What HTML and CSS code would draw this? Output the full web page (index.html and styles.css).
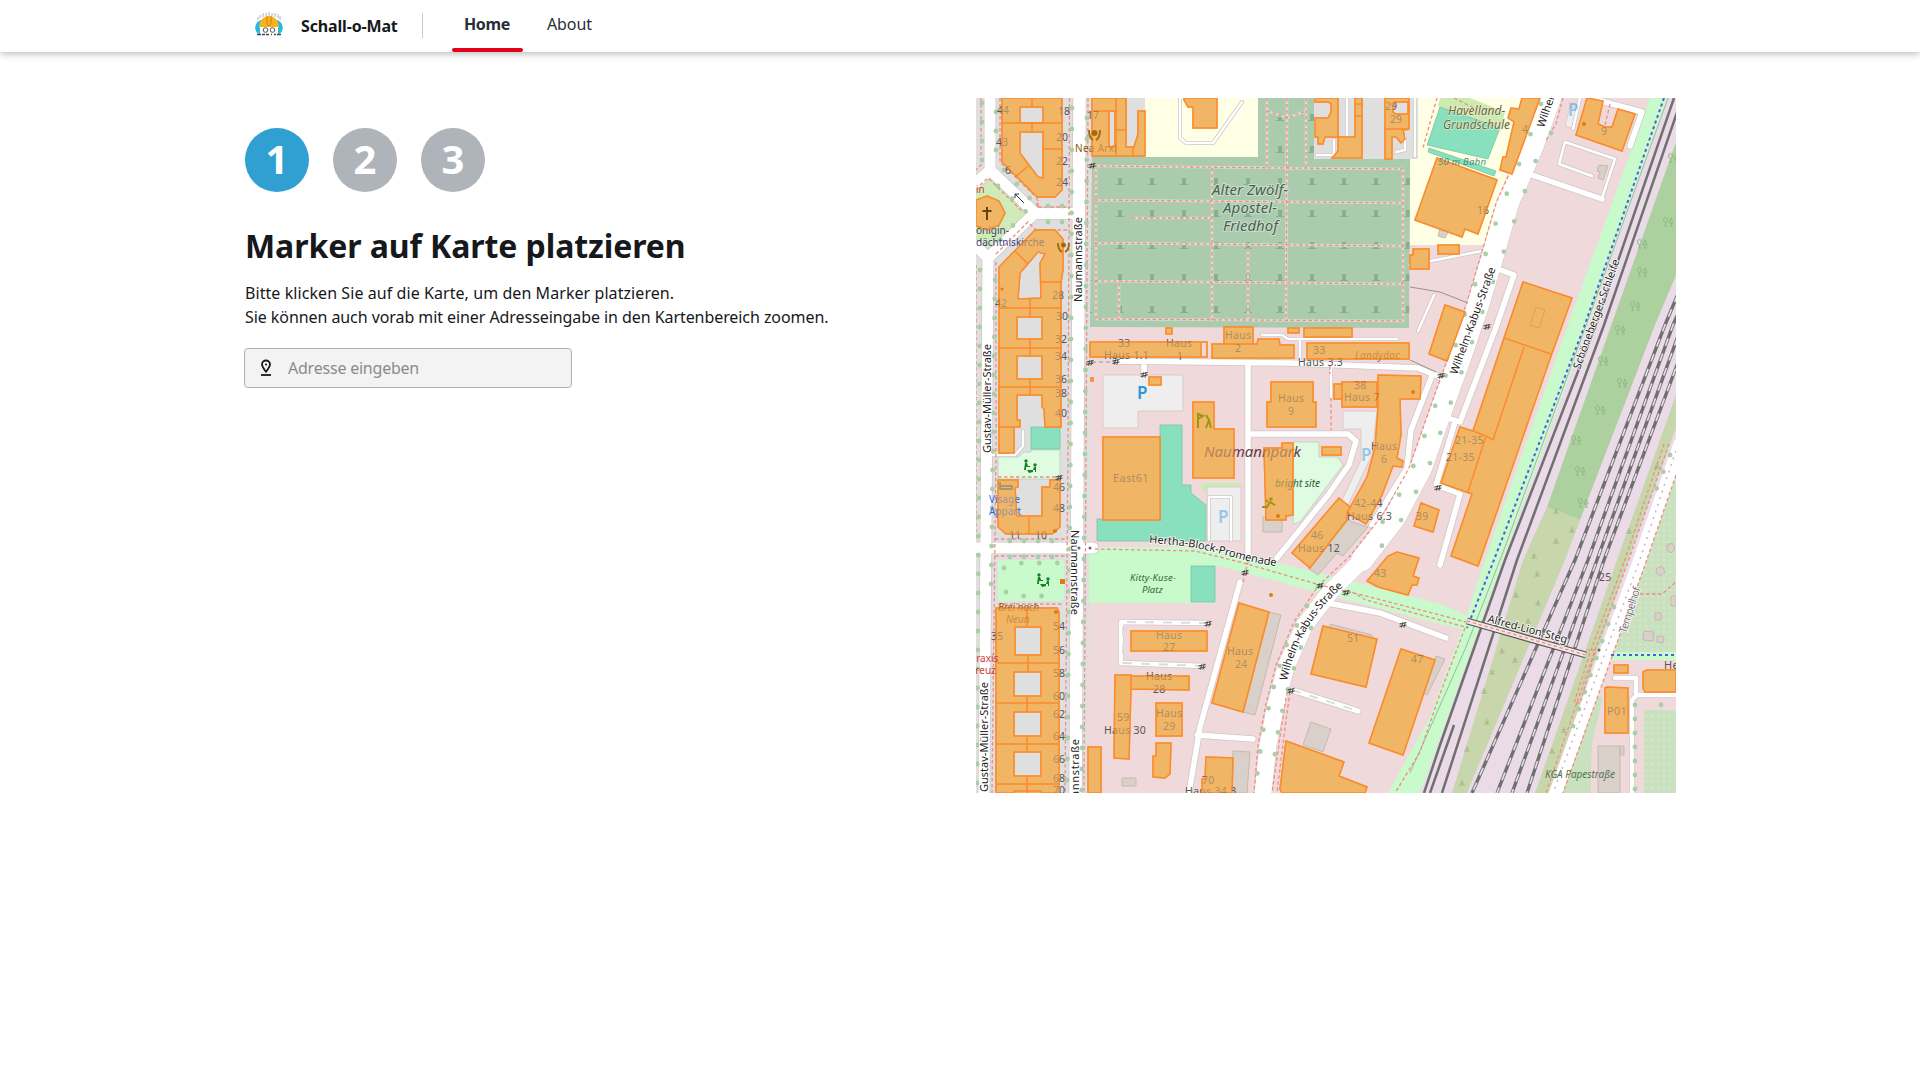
FILE: index.html
```html
<!DOCTYPE html>
<html lang="de">
<head>
<meta charset="utf-8">
<title>Schall-o-Mat</title>
<link rel="stylesheet" href="styles.css">
</head>
<body>
<header class="topbar">
  <div class="topbar-inner">
    <div class="brand">
      <svg class="logo" viewBox="0 0 32 28" aria-hidden="true">
        <path d="M5 8V5M7 6V3M10 5V1M13 4V1M16 4V0M19 4V1M22 5V1M25 6V2M27 8V4" stroke="#b0b0b0"/>
        <path d="M9 8C0 9 0 23 9 22zM23 8c9 1 9 15 0 14z" fill="#20b9e8"/>
        <path d="M6 16C6 0 26 0 26 16z" fill="#f9b21d"/>
        <path d="M14 4v8l2 2 2-2V4" fill="none" stroke="#c98712"/>
        <path d="M7 15h18v7H7z" fill="#fff"/>
        <circle cx="12.500" cy="18" r="2.300" fill="#fff" stroke="#555"/><circle cx="19.500" cy="18" r="2.300" fill="#fff" stroke="#555"/>
        <path d="M4 22.500h4m1 0h3m1 0h3m2 0h1m2 0h2m1 0h4" stroke="#444" stroke-width="1.500"/>
      </svg>
      <span class="brand-name">Schall-o-Mat</span>
    </div>
    <nav class="nav">
      <a class="nav-link active">Home</a>
      <a class="nav-link">About</a>
    </nav>
  </div>
</header>
<main class="content">
  <section class="panel">
    <ol class="steps">
      <li class="step current">1</li>
      <li class="step">2</li>
      <li class="step">3</li>
    </ol>
    <h1 class="title">Marker auf Karte platzieren</h1>
    <p class="intro"><span class="line-a">Bitte klicken Sie auf die Karte, um den Marker platzieren.</span><br><span class="line-b">Sie können auch vorab mit einer Adresseingabe in den Kartenbereich zoomen.</span></p>
    <div class="field">
      <svg class="pin" viewBox="0 0 12 18" aria-hidden="true"><path d="M6 12.800C3.500 9.500 2 7.500 2 5.500a4 4 0 0 1 8 0c0 2-1.500 4-4 7.300z" fill="none" stroke="#16181b" stroke-width="1.800"/><circle cx="6" cy="5.500" r="1"/><path d="M1 16h10" stroke="#16181b" stroke-width="1.800"/></svg>
      <span class="placeholder">Adresse eingeben</span>
    </div>
  </section>
  <svg class="map" viewBox="976 98 700 695" role="img" aria-label="Karte">
    <defs>
      <pattern id="graves" x="1104" y="165" width="32" height="32" patternUnits="userSpaceOnUse">
        <path d="M12 20h8v-1h-2v-6h-4v6h-2z" fill="#85b18e"/>
      </pattern>
      <pattern id="plots" width="6" height="6" patternUnits="userSpaceOnUse"><circle cx="2" cy="2" r=".8" fill="#e3f0dc"/></pattern>
      <g id="trees" fill="none" stroke="#8fbb85"><ellipse cx="-2.500" cy="-2" rx="2" ry="2.500"/><path d="M-2.500 0v4M3 4v-4M1 1l2-5 2 5zM-4 4h3M2 4h3"/></g>
      <path id="scrub" d="M-3 2h6M0 2v-5M0 1l-2-2M0 1l2-2" stroke="#a3b586" fill="none"/>
      <path id="gate" d="M-3.500 0l7-1.500M-3.500 2.500l7-1.500M-1.500 3.500l1-5M1 3.500l1-5" stroke="#444" fill="none"/>
      <g id="play" fill="#178224"><circle cx="-4" cy="-6" r="1.700"/><path d="M-5-4h2l1 3h2v1h-4v3h-2z"/><circle cx="5" cy="-2" r="1.700"/><path d="M4 0h2v5H5V3H3zM-3 3h6v2l-4 1z"/></g>
      <g id="houses" class="house">
        <path d="M1002 98H1062V190L1055 197H1037L1002 162ZM1020 107V123H1043V107ZM1020 132V153L1038 177L1043 178V132Z"/>
        <path d="M1002 123H1062M1032 98V107M1032 123V132M1043 149H1062M1015 177L1028 166"/>
        <path d="M1035 230H1055L1063 239V270L1061 283V427H1045L1044 409L1042 407V395H1017V420H1020V427H1014V453H999V267ZM1020 273L1038 252L1045 254L1040 263L1041 298L1018 299ZM1017 317V339H1042V317ZM1017 356V379H1042V356Z"/>
        <path d="M1015 251L1028 264M1000 308H1061M999 348H1060M999 387H1060M1030 299V317M1030 339V356M1030 379V395M1041 282H1061M999 427H1014"/>
        <path d="M998 480H1018V487L1015 488L1017 516H1042V487H1050V480H1060V527L1052 534H1006L998 527Z"/><path d="M1029 517V534"/>
        <path d="M996 608H1057L1059 612V793H996ZM1015 627V655H1041V627ZM1014 672V696H1041V672ZM1014 712V736H1041V712ZM1014 752V776H1041V752Z"/>
        <path d="M996 663H1059M996 703H1059M996 744H1059M996 784H1059M1027 608V627M1028 655V672M1027 696V712M1027 736V752M1027 776V793M1014 793V791H1041V793"/>
        <path d="M987 196L999 201L1005 213L999 225L987 230L976 226V200Z"/>
        <path d="M1092 98H1126V147H1134L1138 134V111H1145V156H1092ZM1109 111V147L1115 146V111Z"/><path d="M1092 111H1109M1116 98V156M1116 130H1125M1133 147V156"/>
        <path d="M1184 98H1217V128H1193V107H1188L1184 100Z"/>
        <path d="M1315 98H1338V137H1325L1323 144H1318V137H1315V118H1328L1331 112V104L1328 102H1315ZM1338 137H1355V98H1362V158H1332L1338 151ZM1385 98H1409V129L1403 130L1405 139L1401 143L1396 137H1392V159H1385ZM1395 102L1393 107V112L1396 114H1408V102Z"/><path d="M1355 104H1362M1355 116H1362M1385 129H1409"/>
        <path d="M1437 158L1497 180L1478 234L1465 229L1462 237L1415 220ZM1413 249H1429V269H1410V255H1413ZM1438 245H1459V254H1438Z"/>
        <path d="M1522 98H1540L1512 174L1500 170L1503 157H1506L1514 122L1508 118L1511 108L1519 109Z"/>
        <path d="M1587 98L1603 101L1598 124L1605 127L1612 127L1618 109L1635 114L1622 151L1576 135Z"/>
        <path d="M1445 305L1465 312L1447 361L1429 354Z"/>
        <path d="M1523 282L1572 298L1551 356L1478 566L1451 556L1472 494L1441 483L1460 427L1473 431L1504 338Z"/><path d="M1504 338L1551 354M1524 347L1493 440L1486 436L1468 492M1473 431L1486 436"/>
        <path d="M1090 342H1207V357H1090ZM1224 327H1253V344H1224ZM1212 344H1257L1258 339H1279L1280 345H1294V358H1212ZM1288 328H1299V333H1288ZM1304 328H1352V337H1304ZM1307 343H1409V359H1307ZM1166 328H1172V334H1166ZM1149 377H1161V385H1149ZM1201 342H1207V357H1201ZM1091 378H1093V381H1091Z"/>
        <path d="M1103 437H1160V520H1103ZM1193 402H1214V429H1234V478H1193Z"/>
        <path d="M1271 382H1313V402H1316V427H1267V402H1271ZM1264 448H1282V443H1293V515L1286 516V520H1266ZM1322 447H1341V455H1322ZM1342 382H1377V407H1342ZM1334 384H1342V399H1334Z"/>
        <path d="M1378 375L1421 376L1420 399H1400L1401 435L1397 458L1403 461L1402 467L1393 466L1382 495L1366 524L1347 513L1367 477L1375 448L1378 408Z"/>
        <path d="M1339 498L1350 507L1347 513V520L1310 568L1292 553ZM1421 503L1439 510L1433 532L1414 526ZM1367 581L1388 556L1397 552L1419 558L1413 576L1419 578L1417 585H1412L1408 595L1378 587Z"/>
        <path d="M1239 603L1269 612L1243 712L1212 703ZM1323 626L1377 639L1366 687L1311 674ZM1401 649L1435 660L1403 755L1369 743ZM1286 741L1344 762L1339 776L1367 787L1365 793H1282L1280 789ZM1206 757L1233 758L1232 793H1202V779H1205Z"/>
        <path d="M1131 631H1207V651H1131ZM1115 675H1131V676H1189V690L1131 689L1129 759L1114 758ZM1131 676V689M1156 703H1182V736H1156ZM1156 743H1171L1170 774L1165 778L1153 777V756H1156ZM1088 747H1101V793H1088Z"/>
        <path d="M1614 665H1628V673H1614ZM1605 688L1607 687L1628 688V733H1605ZM1643 672L1647 670H1676V692H1645L1643 688Z"/>
      </g>
      <path id="naumann" d="M1079.500 98L1077.500 450L1075.500 793"/>
      <path id="gustav" d="M990 98V170L1035 213L988 258L984 793M976 183L990 170M976 246L988 258M1035 213.500H1079M976 548H1093"/>
      <path id="wk-north" d="M1550 98L1533 145L1508 203L1493 255L1478 305L1460 358L1443 405L1421 468L1395 517L1362 560"/>
      <path id="wk-south" d="M1362 560L1330 592L1304 626L1286 667L1276 704L1268 745L1263 793"/>
      <path id="service" d="M1116 361L1290 363L1418 368L1440 377L1455 382M1144 361V373M1248 363V555M1250 434H1348L1356 441L1349 465L1328 495L1277 558M1433 373L1411 430L1407 468L1372 525M1498 269L1514 275L1495 330L1460 422L1435 414M1455 422L1436 485L1460 494L1440 565M1240 582L1200 727L1189 793M1197 735L1253 739M1328 603L1380 613L1446 638M1532 175L1602 199M1590 98L1642 112L1630 146M1292 690L1358 711"/>
      <path id="yards" d="M1208 623L1121 622V663L1203 666M1632 793V700L1637 695H1676M1615 678H1636V693"/>
      <path id="drives" d="M1602 198L1615 159L1565 142L1559 164L1592 176M1180 98V138L1186 143H1213L1242 102M1209 540V497H1231V540M1262 335H1282L1288 339H1397M1300 340V362M1331 367V397M992 455H1015L1023 446V431M1410 265L1487 250M1347 98V136M1415 98V156M1580 98L1573 129M1317 155H1334L1334 140M1396 152L1405 150V136M1418 331L1434 295"/>
      <path id="graveways" d="M1094 166L1287 168L1403 169L1403 321L1096 319V168M1095 200L1403 203M1132 218H1212M1095 243L1403 246M1095 281L1403 284M1119 283V319M1212 168V320M1248 248V319M1287 98V118L1286 320M1267 98V168M1306 98V168M1267 111L1287 118L1306 111"/>
      <path id="tracks" d="M1690 265L1665 325L1575 560L1472 793M1700 265L1673 325L1588 560L1497 793M1710 265L1682 325L1597 560L1512 793M1718 265L1692 325L1604 560L1527 793"/>
    </defs>

    <rect x="976" y="98" width="700" height="695" fill="#f0d9da"/>
    <path class="gray" d="M976 98H1090V450L1088 793H976Z"/>
    <path class="gray" d="M1315 98H1418V159H1315ZM1124 98H1146V150H1104V104Z"/>
    <!-- cemetery -->
    <path fill="#aacbae" d="M1092 156H1258V98H1314V159H1410L1409 328L1090 327Z"/>
    <path fill="url(#graves)" d="M1092 156H1258V98H1314V159H1410L1409 328L1090 327Z"/>
    <use href="#graveways" class="pathbase"/><use href="#graveways" class="foot"/>
    <!-- school grounds -->
    <path fill="#ffffe5" d="M1145 98H1258V157H1145ZM1418 98H1542L1512 172L1488 245H1410V159H1418Z"/>
    <path fill="#cdebb0" d="M1440 98H1470L1505 112L1500 130L1438 106Z"/>
    <path class="pitch" d="M1440 107L1500 128L1488 159L1427 145ZM1429 148L1496 171L1494 176L1428 152Z"/>
    <!-- parks, pitches, parking -->
    <path fill="#d0ebb8" d="M988 176L1027 213L988 251L976 240V188Z"/>
    <path fill="#dffce2" stroke="#bcd8bf" d="M998 457H1018L1024 452H1031V450H1060V479H998ZM1293 442H1319V457H1338L1343 465L1300 522L1293 524Z"/>
    <path class="pitch" d="M1031 427H1060V449H1031Z"/>
    <rect class="park" x="998" y="560" width="66" height="41" rx="4"/>
    <path class="park" d="M1089 547H1195L1265 560L1360 583L1440 604L1470 617L1466 630L1440 624L1313 591L1215 565V603H1089Z"/>
    <path class="pitch" d="M1191 566H1215V602H1191ZM1160 425H1182V485H1191V493L1206 505V541H1097V519H1160Z"/>
    <path fill="none" stroke="#cdebb0" stroke-width="9" stroke-linecap="round" d="M1206 487H1236"/>
    <path class="parking" d="M1103 375H1183V411H1138V428H1103ZM1207 487H1241V541H1207ZM1343 411H1377L1372 455L1348 505L1342 500L1361 460V429H1343ZM1570 107L1579 109L1573 129L1565 126Z"/>
    <path class="shed" d="M1263 517H1282V532H1263ZM1347 520L1368 527L1343 556L1337 553L1318 575L1308 568ZM1269 612L1281 615L1255 715L1243 712ZM1233 751L1250 752L1247 793H1232ZM1311 722L1331 729L1323 752L1303 745ZM1122 778H1136V786H1122ZM1599 165L1608 166L1603 180L1598 178L1600 172L1597 171ZM1330 624L1372 635V638L1330 628ZM1436 656L1445 659L1427 695L1424 693ZM1440 229L1448 232L1445 238L1438 236Z"/>

    <!-- railway corridor -->
    <path fill="#ebdbe8" d="M1668 98H1676V450L1553 793H1420Z"/>
    <path class="park" d="M1650 98L1568 325L1484 562L1463 627L1430 717L1388 793H1420L1440 738L1502 562L1588 325L1668 98Z"/>
    <path fill="#add19e" d="M1676 142L1547 507L1580 520L1655 325L1676 275Z"/>
    <path fill="#c8d7ab" d="M1547 507L1580 520L1565 560L1467 793H1452L1523 560ZM1676 395L1617 560L1535 793H1550L1628 560L1676 428Z"/>
    <path fill="none" stroke="#9fb79f" d="M1668 98L1588 320L1502 555L1466 647L1410 773"/>
    <path fill="#c9e1bf" d="M1676 460L1612 652H1676ZM1598 697H1603L1592 745L1591 793H1560ZM1644 710H1676V793H1644Z"/>
    <path fill="url(#plots)" d="M1676 460L1612 652H1676ZM1644 710H1676V793H1644Z"/>
    <path fill="#c8facc" d="M1611 652H1676V660H1609Z"/>
    <path fill="#f0d9da" d="M1608 660H1676V710H1644V793H1591L1592 745L1603 697H1598Z"/>
    <path class="shed" d="M1598 746H1620V793H1598ZM1620 746H1624V755H1620ZM1657 568L1662 566L1665 572L1660 576L1656 573ZM1655 613H1661V620H1655ZM1644 631L1654 632L1653 641L1643 640ZM1657 636L1664 637L1663 643L1657 642ZM1671 596H1676V606H1671ZM1667 545L1672 543L1675 549L1671 553L1667 550Z"/>
    <path class="rail" d="M1674 98L1596 325L1505 560L1440 745L1424 793M1682 98L1604 325L1517 560L1442 793M1454 725L1430 793"/>
    <use href="#tracks" class="rail-main"/><use href="#tracks" class="rail-dash"/>
    <use href="#trees" x="1668" y="222"/><use href="#trees" x="1673" y="158"/><use href="#trees" x="1642" y="244"/><use href="#trees" x="1642" y="272"/><use href="#trees" x="1635" y="306"/><use href="#trees" x="1620" y="330"/><use href="#trees" x="1603" y="361"/><use href="#trees" x="1622" y="383"/><use href="#trees" x="1600" y="410"/><use href="#trees" x="1576" y="440"/><use href="#trees" x="1580" y="471"/><use href="#trees" x="1583" y="503"/>
    <use href="#scrub" x="1556" y="511"/><use href="#scrub" x="1572" y="530"/><use href="#scrub" x="1556" y="541"/><use href="#scrub" x="1534" y="556"/><use href="#scrub" x="1537" y="574"/><use href="#scrub" x="1516" y="595"/><use href="#scrub" x="1538" y="603"/><use href="#scrub" x="1528" y="621"/><use href="#scrub" x="1502" y="651"/><use href="#scrub" x="1515" y="660"/><use href="#scrub" x="1492" y="672"/><use href="#scrub" x="1484" y="691"/><use href="#scrub" x="1487" y="722"/><use href="#scrub" x="1467" y="749"/><use href="#scrub" x="1462" y="783"/><use href="#scrub" x="1657" y="466"/><use href="#scrub" x="1629" y="531"/><use href="#scrub" x="1564" y="730"/><use href="#scrub" x="1552" y="751"/>

    <!-- street casings, then fills -->
    <g class="road casing">
      <use href="#naumann" stroke-width="14"/><use href="#gustav" stroke-width="12.500"/><use href="#wk-north" stroke-width="23"/><use href="#wk-south" stroke-width="18"/><use href="#service" stroke-width="7"/><use href="#yards" stroke-width="6"/><use href="#drives" stroke-width="4"/>
    </g>
    <g class="road fill">
      <use href="#naumann" stroke-width="12.500"/><use href="#gustav" stroke-width="11"/><use href="#wk-north" stroke-width="22"/><use href="#wk-south" stroke-width="17"/><use href="#service" stroke-width="5.500"/><use href="#yards" stroke-width="4.500"/><use href="#drives" stroke-width="2.500"/>
      <path stroke-width="13" d="M1680 444L1639 562L1553 800"/>
    </g>
    <path fill="none" stroke="#dcdcdc" stroke-width="2" stroke-dasharray="9 9" d="M1208 623L1123 622V663L1203 666M1292 690L1358 711"/>
    <path fill="none" stroke="#c9b0cf" stroke-width="1.500" stroke-dasharray="2 5" d="M1678 444L1639 562L1553 793"/>
    <path fill="none" stroke="#9a9093" d="M1410 287L1440 292L1468 303M1410 360L1436 372"/>
    <path fill="none" stroke="#bbb" stroke-width="2" stroke-dasharray="4 3" d="M1092 362H1116"/>

    <!-- footways -->
    <path class="foot" d="M1069.500 98L1068 450L1065 793M1088 98L1086 450L1084 793M981 98V165L976 170M1000 98V162L1037 198V207H1070M996 254L1028 222L1036 230H1070M996 262V450L992 793M976 265V540M1038 207V200M980 185L988 178L1022 211M998 477H1060M995 539H1068M995 556H1068M998 604H1064"/>
    <path class="foot" d="M1095 549L1195 551L1240 562L1320 585L1350 592L1440 615L1466 622M1352 592L1366 600L1440 620L1465 627M1465 628L1440 694L1420 752L1395 793M1331 398V430M1330 366V374M1243 582L1248 562"/>
    <path class="foot" d="M1540 98L1520 150L1496 203L1481 255L1466 305L1448 358L1431 405L1409 468L1384 513L1350 556L1318 586L1294 622L1276 665L1266 704L1258 745L1254 793M1290 692L1286 720L1277 793M1287 692L1281 730L1272 793M1563 98L1556 124L1545 142M1437 98L1423 148M1610 104L1605 125M1454 98L1474 108"/>
    <path class="foot" d="M1669 444L1628 562L1595 650L1546 793M1664 444L1624 562L1591 650L1574 703H1580L1596 650H1588M1676 475L1646 562L1563 793M1640 594H1662L1676 582"/>
    <path fill="none" stroke="#4a5ee0" stroke-width="2" stroke-dasharray="3 3" d="M1664 98L1583 330L1492 565L1467 628M1611 655H1676"/>
    <path d="M1467 621L1586 655" stroke="#555" stroke-width="7"/><path d="M1467 621L1586 655" stroke="#f3e6e6" stroke-width="4.500"/><path class="foot" d="M1467 621L1586 655"/>

    <!-- street trees -->
    <g class="tree">
      <path stroke-dasharray="0 21" d="M1072 108L1070.500 450L1067 793M1087 118L1085 450L1081.500 793"/>
      <path stroke-dasharray="0 19" d="M982 103V165M996 112V165M980 270L977 793M995 280L991 600M1004 170L1036 205M998 186L1026 211L1000 240"/>
      <path stroke-dasharray="0 14" d="M1048 206H1068M1048 222H1068M1010 541H1064M1010 557H1064M1635 705V790"/>
      <path stroke-dasharray="0 32" d="M1541 104L1525 150L1500 210L1482 265L1466 310L1453 354L1431 418L1413 467L1391 511L1364 546M1551 133L1536 160L1516 216L1508 240L1490 290L1463 368L1452 399L1428 469L1399 524L1369 562"/>
      <path stroke-dasharray="0 22" d="M1307 606L1285 648L1274 686L1263 731L1257 776M1311 628L1300 649L1294 668L1284 703L1278 732L1272 775"/>
      <path stroke-dasharray="0 18" d="M1670 455L1656 490M1614 607L1570 735M1004 568L1022 563H1058M1006 592L1024 596H1058M1661 705H1676"/>
    </g>

    <!-- labels; the translucent building layer is laid over them -->
    <use href="#houses"/>
    <g class="lab">
      <text x="997" y="114">44</text><text x="1058" y="115">18</text><text x="1087" y="119">17</text><text x="996" y="146">43</text><text x="1056" y="141">20</text><text x="1056" y="165">22</text><text x="1056" y="186">24</text><text x="1005" y="174">6</text>
      <text x="995" y="307">42</text><text x="1052" y="299">28</text><text x="1056" y="320">30</text><text x="1055" y="343">32</text><text x="1055" y="360">34</text><text x="1055" y="383">36</text><text x="1055" y="397">38</text><text x="1055" y="417">40</text><text x="1053" y="491">46</text><text x="1053" y="512">48</text><text x="1009" y="539">11</text><text x="1035" y="539">10</text>
      <text x="991" y="640">35</text><text x="1053" y="630">54</text><text x="1053" y="654">56</text><text x="1053" y="677">58</text><text x="1053" y="700">60</text><text x="1053" y="718">62</text><text x="1053" y="740">64</text><text x="1053" y="763">66</text><text x="1053" y="782">68</text><text x="1053" y="794">70</text>
      <text x="1385" y="110">29</text><text x="1390" y="123">29</text><text x="1477" y="214">16</text><text x="1522" y="133">4</text><text x="1601" y="135">9</text>
    </g>
    <g class="lab name">
      <text x="1075" y="152" class="tan">Nea Arxi</text>
      <text x="1118" y="347">33</text><text x="1166" y="347">Haus</text><text x="1177" y="360">1</text><text x="1104" y="359">Haus 1.1</text>
      <text x="1225" y="339">Haus</text><text x="1235" y="352">2</text><text x="1313" y="354">33</text><text x="1355" y="359" class="tan it">Landydoc</text>
      <text x="1278" y="402">Haus</text><text x="1288" y="415">9</text><text x="1354" y="389">38</text><text x="1344" y="401">Haus 7</text>
      <text x="1371" y="450">Haus</text><text x="1381" y="463">6</text><text x="1354" y="507">42-44</text><text x="1347" y="520">Haus 6.3</text><text x="1311" y="539">46</text><text x="1298" y="552">Haus 12</text>
      <text x="1113" y="482" class="big">East61</text><text x="1416" y="520">39</text><text x="1374" y="577">43</text><text x="1347" y="642">51</text><text x="1411" y="663">47</text>
      <text x="1455" y="444">21-35</text><text x="1446" y="461">21-35</text>
      <text x="1227" y="655">Haus</text><text x="1235" y="668">24</text><text x="1156" y="639">Haus</text><text x="1163" y="651">27</text><text x="1146" y="680">Haus</text><text x="1153" y="693">28</text><text x="1156" y="717">Haus</text><text x="1163" y="730">29</text><text x="1117" y="721">59</text><text x="1104" y="734">Haus 30</text>
      <text x="1202" y="784">70</text><text x="1185" y="795">Haus 34.3</text><text x="1607" y="715" class="big">P01</text><text x="1664" y="669" class="big">Hermann</text><text x="1599" y="581">25</text>
      <text x="1298" y="366">Haus 3.3</text>
    </g>
    <g class="place">
      <text x="1204" y="457" class="np" textLength="97">Naumannpark</text>
      <text x="1275" y="487" class="green" textLength="45">bright site</text>
      <text x="998" y="611" class="tan it" textLength="41">Brei nach</text><text x="1006" y="623" class="tan it">Neun</text>
    </g>
    <g class="shop"><text x="989" y="503">Visage</text><text x="989" y="515">Appart</text></g>
    <g class="navy"><text x="976" y="234">önigin-</text><text x="976" y="246">dächtniskirche</text></g>
    <use href="#houses" class="wash"/>

    <g class="place">
      <text x="1212" y="195" class="cem" textLength="76">Alter Zwölf-</text><text x="1223" y="213" class="cem" textLength="54">Apostel-</text><text x="1223" y="231" class="cem" textLength="55">Friedhof</text>
      <text x="1448" y="115" class="school">Havelland-</text><text x="1443" y="129" class="school" textLength="67">Grundschule</text><text x="1438" y="165" class="tiny" textLength="48">50 m Bahn</text>
      <text x="1130" y="581" class="kuse" textLength="46">Kitty-Kuse-</text><text x="1142" y="593" class="kuse">Platz</text><text x="1545" y="778" class="kga" textLength="70">KGA Papestraße</text>
    </g>
    <g class="red"><text x="976" y="193">in</text><text x="970" y="662">praxis</text><text x="970" y="674">kreuz</text></g>
    <g class="street">
      <text transform="translate(1082 302) rotate(-90)" textLength="85">Naumannstraße</text>
      <text transform="translate(1071 530) rotate(90)" textLength="85">Naumannstraße</text>
      <text transform="translate(1079 808) rotate(-90)" textLength="69">mannstraße</text>
      <text transform="translate(991 453) rotate(-90)" textLength="109">Gustav-Müller-Straße</text>
      <text transform="translate(988 792) rotate(-90)" textLength="110">Gustav-Müller-Straße</text>
      <text transform="translate(1457 375) rotate(-70)" textLength="113">Wilhelm-Kabus-Straße</text>
      <text transform="translate(1544 128) rotate(-71)">Wilhelm</text>
      <path id="kabus" d="M1287 681Q1300 620 1348 583" fill="none"/><text textLength="112"><textPath href="#kabus">Wilhelm-Kabus-Straße</textPath></text>
      <text transform="translate(1580 370) rotate(-70)" textLength="116">Schöneberger-Schleife</text>
      <path id="hertha" d="M1149 543Q1190 545 1221 554T1280 567" fill="none"/><text textLength="129"><textPath href="#hertha">Hertha-Block-Promenade</textPath></text>
      <text transform="translate(1487 622) rotate(15)" textLength="82">Alfred-Lion-Steg</text>
      <text transform="translate(1626 634) rotate(-72)" textLength="48" class="muted">Tempelhof</text>
    </g>
    <g class="park-p"><text x="1137" y="399">P</text><g opacity=".45"><text x="1361" y="461">P</text><text x="1218" y="523">P</text><text x="1568" y="116">P</text></g></g>
    <path d="M987 207V220M982.500 211H991.500" stroke="#66450a" stroke-width="2"/>
    <path d="M1024 203L1015 194M1015 198V194H1019" stroke="#333" fill="none"/>
    <use href="#play" x="1030" y="467"/><use href="#play" x="1043" y="581"/>
    <g fill="none" stroke="#a66b0c" stroke-width="2"><path d="M1089 130Q1089 138 1093 140M1100 130Q1100 138 1096 140M1058 243Q1058 250 1062 252M1069 243Q1069 250 1065 252"/><circle cx="1094.500" cy="133" r="2" fill="#a66b0c"/><circle cx="1063.500" cy="245" r="1.500" fill="#704b17"/></g>
    <g fill="none" stroke="#9b9713" stroke-width="2"><path d="M1198 428V414L1203 416L1198 419M1206 415L1209 420L1206 428M1209 420L1211 428"/><path d="M1262 507H1267L1270 502L1275 505M1268 502L1266 500"/></g><circle cx="1271" cy="499" r="1.800" fill="#9b9713"/>
    <path fill="none" stroke="#8f8f7a" stroke-width="1.500" d="M1000 482v7h12v-3h-12"/>
    <g fill="#df7b14"><circle cx="1271" cy="595" r="2"/><circle cx="1413" cy="392" r="2"/><circle cx="1278" cy="516" r="2"/><circle cx="1056" cy="612" r="2"/><circle cx="1055" cy="531" r="2"/><circle cx="1584" cy="124" r="2"/><circle cx="1002" cy="289" r="1.500"/><rect x="1060" y="579" width="5" height="5"/></g>
    <use href="#gate" x="1092" y="165"/><use href="#gate" x="1090" y="362"/><use href="#gate" x="1116" y="361"/><use href="#gate" x="1144" y="374"/><use href="#gate" x="1059" y="477"/><use href="#gate" x="1245" y="572"/><use href="#gate" x="1208" y="623"/><use href="#gate" x="1202" y="666"/><use href="#gate" x="1320" y="585"/><use href="#gate" x="1346" y="592"/><use href="#gate" x="1403" y="624"/><use href="#gate" x="1291" y="690"/><use href="#gate" x="1438" y="487"/><use href="#gate" x="1441" y="375"/><use href="#gate" x="1487" y="326"/>
    <g fill="#666"><circle cx="1079" cy="548" r="1.500"/><circle cx="1090" cy="548" r="1.500"/><circle cx="1599" cy="650" r="1.500"/></g>
    <path d="M1530 325L1536 307L1545 310L1539 328Z" fill="none" stroke="#e3a050"/>
  </svg>
</main>
</body>
</html>
```
FILE: styles.css
```css
* { box-sizing: border-box; }
body { margin: 0; background: #fff; color: #16181b; font-family: "Noto Sans", "Open Sans", sans-serif; }
.topbar { height: 52px; background: #fff; box-shadow: 0 1px 8px rgba(0, 0, 0, .32); }
.topbar-inner { display: flex; height: 52px; padding-left: 253px; }
.brand { display: flex; align-items: center; width: 170px; height: 25px; margin-top: 13px; border-right: 1px solid #c9cbcf; }
.logo { width: 32px; height: 28px; flex: none; }
.brand-name { margin-left: 16px; font-size: 16px; font-weight: 700; line-height: 24px; white-space: nowrap; letter-spacing: -.15px; }
.nav { display: flex; margin-left: 29px; gap: 12px; }
.nav-link { height: 52px; padding: 0 12px; font-size: 16px; line-height: 48px; color: #282d37; letter-spacing: -.1px; }
.nav-link.active { width: 71px; font-weight: 700; position: relative; letter-spacing: -.4px; }
.nav-link.active::after { content: ""; position: absolute; left: 0; right: 0; bottom: 0; height: 4px; border-radius: 2px; background: #e2001a; }
.content { display: flex; padding: 46px 244px 0 245px; }
.panel { width: 731px; padding-top: 30px; }
.steps { display: flex; gap: 24px; margin: 0; padding: 0; list-style: none; }
.step { width: 64px; height: 64px; border-radius: 50%; background: #afb4bb; color: #fff; font-size: 40px; line-height: 62px; font-weight: 700; text-align: center; }
.step.current { background: #309fd1; }
.title { margin: 30px 0 0; font-size: 32px; line-height: 48px; font-weight: 700; white-space: nowrap; letter-spacing: -.08px; }
.intro { margin: 11px 0 0; font-size: 16px; line-height: 24px; white-space: nowrap; }
.line-a { letter-spacing: .07px; }
.line-b { letter-spacing: -.07px; }
.field { display: flex; align-items: center; width: 328px; height: 40px; margin: 19px 0 0 -1px; padding-left: 15px; background: #f3f3f3; border: 1px solid #b0b1b5; border-radius: 4px; }
.pin { width: 12px; height: 18px; }
.placeholder { margin-left: 16px; font-size: 16px; color: #8a8b8e; letter-spacing: -.22px; }
.map { width: 700px; height: 695px; flex: none; display: block; overflow: hidden; font-family: "Noto Sans", sans-serif; }
.gray { fill: #e0dfdf; }
.park { fill: #c8facc; }
.pitch { fill: #88e0be; stroke: #70bfa1; stroke-width: .7; }
.parking { fill: #eee; stroke: #dccaca; }
.shed { fill: #d9d0c9; stroke: #c5b9af; }
.house path { fill: #f0b666; fill-rule: evenodd; stroke: #fb8b2b; stroke-width: 1.5; }
.wash { opacity: .58; }
.road { fill: none; stroke-linecap: round; stroke-linejoin: round; }
.casing { stroke: #cfc6c7; }
.road.fill { stroke: #fff; }
.pathbase { fill: none; stroke: #d9dfcf; stroke-width: 2.5; }
.foot { fill: none; stroke: #f28b82; stroke-width: 1.3; stroke-dasharray: 3.5 2.5; }
.rail { fill: none; stroke: #707070; stroke-width: 2.5; }
.rail-main { fill: none; stroke: #707070; stroke-width: 3.4; }
.rail-dash { fill: none; stroke: #e6e0e6; stroke-width: 1.6; stroke-dasharray: 8 8; }
.tree { fill: none; stroke: #a8cfa5; stroke-width: 4.8; stroke-linecap: round; }
.lab { font-size: 10.5px; fill: #555; }
.name { letter-spacing: .3px; }
.lab .big { font-size: 11px; }
.tan { fill: #8f560c; font-size: 10px; }
.it { font-style: italic; }
.np { font-size: 15px; font-style: italic; fill: #66394a; }
.green { font-size: 10px; font-style: italic; fill: #2b5a30; }
.shop { font-size: 10px; fill: #1f68e0; }
.cem { font-size: 15px; font-style: italic; fill: #48604c; stroke: #cbdecd; stroke-width: 2px; paint-order: stroke; }
.school { font-size: 12px; font-style: italic; fill: #69643c; stroke: #f2f5d8; stroke-width: 1px; paint-order: stroke; }
.tiny { font-size: 9.5px; font-style: italic; fill: #428f76; }
.kuse { font-size: 9.5px; font-style: italic; fill: #35673b; }
.kga { font-size: 10px; font-style: italic; fill: #557457; }
.red { font-size: 10px; fill: #cc3b3b; }
.navy { font-size: 10px; fill: #3c4277; }
.street { font-size: 11px; fill: #222; stroke: #fff; stroke-width: 1.5px; paint-order: stroke; }
.street path { stroke: none; }
.muted { fill: #80727f; }
.park-p { font-size: 17px; font-weight: 600; fill: #2a98dd; }
```
